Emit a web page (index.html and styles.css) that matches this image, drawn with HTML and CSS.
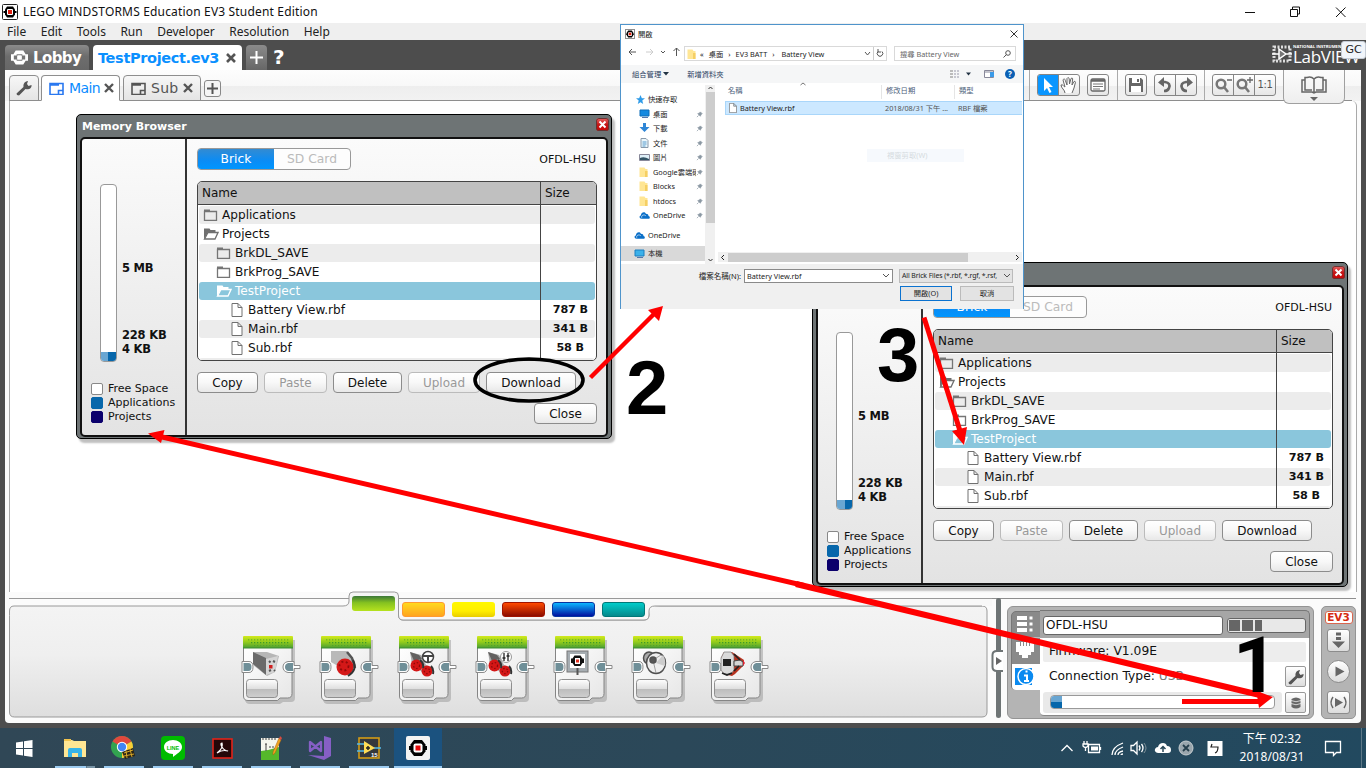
FILE: index.html
```html
<!DOCTYPE html>
<html lang="zh-Hant">
<head>
<meta charset="utf-8">
<title>LEGO MINDSTORMS Education EV3 Student Edition</title>
<link rel="stylesheet" href="styles.css">
</head>
<body>
<svg class="defs" width="0" height="0">
  <defs>
    <linearGradient id="gGreen" x1="0" y1="0" x2="0" y2="1"><stop offset="0" stop-color="#d3ea1c"/><stop offset=".5" stop-color="#93cc1b"/><stop offset="1" stop-color="#4a9e35"/></linearGradient>
    <linearGradient id="gBody" x1="0" y1="0" x2="1" y2="1"><stop offset="0" stop-color="#fff"/><stop offset="1" stop-color="#e6e6e6"/></linearGradient>
    <linearGradient id="gBtn" x1="0" y1="0" x2="0" y2="1"><stop offset="0" stop-color="#fff"/><stop offset=".5" stop-color="#e0e0e0"/><stop offset=".52" stop-color="#bcbcbc"/><stop offset="1" stop-color="#cfcfcf"/></linearGradient>
    <linearGradient id="gPal" x1="0" y1="0" x2="0" y2="1"><stop offset="0" stop-color="#f5f5f5"/><stop offset=".5" stop-color="#efefef"/><stop offset="1" stop-color="#dedede"/></linearGradient>
    <pattern id="dots" width="3" height="3" patternUnits="userSpaceOnUse"><rect x="1" y="1" width="1.300" height="1.300" fill="#3d9a2a"/></pattern>
    <symbol id="folder" viewBox="0 0 15 12"><path d="M1.500 2.500h12v9h-12z" fill="none" stroke="#757575" stroke-width="1.300"/><path d="M1 0.500h6v2H1z" fill="#757575"/></symbol>
    <symbol id="folder-open" viewBox="0 0 16 12"><path d="M1 11V.5h5.500l1 1.500h5v2.500H5z" fill="currentColor"/><path d="M1.500 11L5 4.500h10L12 11z" fill="var(--fill,#fff)" stroke="currentColor" stroke-width="1.300"/></symbol>
    <symbol id="doc" viewBox="0 0 11 14"><path d="M.5.5h6l4 4v9H.5zM6.500.5v4h4" fill="#fff" stroke="#707070"/></symbol>
    <symbol id="pin" viewBox="0 0 8 8"><path d="M1 7l2-2M2 3l3 3 .5-1.500L7 3 5 1 3.500 2.500z" stroke="#8b98a3" fill="#8b98a3" stroke-width=".8"/></symbol>
    <symbol id="yfolder" viewBox="0 0 9 10"><path d="M.5.5h5l1 1.500h2v8h-8z" fill="#ffe694"/><path d="M6 4h2.500v6H6z" fill="#f5cf64"/></symbol>
    <symbol id="cloud" viewBox="0 0 12 8"><path d="M3 8C0 8 0 5 2 4.500 2.500 1 6 0 7.500 2.500c2 0 3 1 2.800 2.500C12.500 5.500 12 8 10.500 8z" fill="#0a6fc8"/><path d="M3 7C2 4 6 3 7.500 5" stroke="#fff" fill="none" stroke-width=".7"/></symbol>
    <symbol id="wrench" viewBox="0 0 18 18"><path d="M2 16l-.5-1.500L8.500 8C8 5 9.500 2.500 13 2l-1 3 1.500 2 3-1C17 9.500 13.500 11 10.500 10L4 16.500z" fill="#555"/></symbol>
    <symbol id="ev3" viewBox="0 0 16 16"><rect x=".5" y=".5" width="15" height="15" rx="1" fill="#fff" stroke="#222"/><path d="M5 2.500h6l2 3v5l-2 3H5l-2-3v-5z" fill="#000"/><path d="M1.500 7h2v2h-2zM12.500 7h2v2h-2z" fill="#000"/><rect x="5" y="5" width="6" height="6" rx="1" fill="#fff"/><rect x="6" y="6" width="4" height="4" fill="#e02010"/></symbol>
    <symbol id="block" viewBox="0 0 64 70">
      <path d="M5 5h49v58q0 4-4 4H42l-3 2H9q-5 0-5-5z" fill="#8d8d8d" opacity=".45"/>
      <path d="M2.500 12v49q0 4.500 4.500 4.500h29.500l2.500-2.500h7.500q4.500 0 4.500-4.500V12z" fill="url(#gBody)" stroke="#858585"/>
      <path d="M2 13V2q0-1 1-1h48q1 0 1 1v11z" fill="url(#gGreen)"/><path d="M2 13h50" stroke="#3c8c30" stroke-width="1"/>
      <path d="M6 4.500h42v6H12z" fill="url(#dots)"/>
      <rect x="5.500" y="44.500" width="31" height="18" rx="3" fill="url(#gBtn)" stroke="#8f8f8f"/>
      <path d="M1 26.500h7q4 0 4 5.500t-4 5.500H1z" fill="#fff" stroke="#8a8a8a"/><path d="M2.500 28h5q3 0 3 4t-3 4h-5z" fill="#6f8f98"/>
      <path d="M53 26.500h-6q-5 1-5 5.500t5 5.500h6v-4h6v-3h-6z" fill="#fff" stroke="#8a8a8a"/><path d="M52 28h-5q-3 1-3 4t3 4h5z" fill="#6f8f98"/>
    </symbol>
    <symbol id="motors" viewBox="0 0 26 26"><path d="M1 1l11 3 5 10 7 4-2 6-9-3-10-8z" fill="#a8a8a8"/><path d="M1 1l9 3 3 4-8 2z" fill="#62605f"/><circle cx="7.500" cy="14.500" r="6" fill="#d41616"/><circle cx="18" cy="20" r="5.500" fill="#d41616"/><circle cx="7.500" cy="14.500" r="3" fill="none" stroke="#8c0909" stroke-dasharray="1.500 2" stroke-width="1.200"/><circle cx="18" cy="20" r="2.700" fill="none" stroke="#8c0909" stroke-dasharray="1.500 2" stroke-width="1.200"/><path d="M11 9q4 3 3 8M22 15q3 3 2 8" stroke="#333" stroke-width="2" fill="none"/></symbol>
  </defs>
</svg>

<header class="titlebar">
  <svg width="16" height="16"><use href="#ev3"/></svg>
  <span class="wtitle">LEGO MINDSTORMS Education EV3 Student Edition</span>
  <svg class="winctl" width="110" height="20"><path d="M5 10.500h10M50.500 7.500h7v7h-7zM52.500 7v-2h7v7h-2M96 5.500l9.500 9.500M105.500 5.500L96 15" fill="none" stroke="#111"/></svg>
</header>
<nav class="menubar"><span>File</span><span>Edit</span><span>Tools</span><span>Run</span><span>Developer</span><span>Resolution</span><span>Help</span></nav>

<main class="app">
  <div class="projtabs">
    <div class="ptab lobby"><svg width="17" height="17" viewBox="0 0 18 18"><path d="M5 1.500h8l2.500 4H18v7h-2.500l-2.500 4H5l-2.500-4H0v-7h2.500z" fill="#fff"/><path d="M6 5.500h6v1.500h3v4h-3v1.500H6V11H3V7h3z" fill="#777"/><rect x="6.500" y="6.500" width="5" height="5" rx="1" fill="#fff"/></svg>Lobby</div>
    <div class="ptab project">TestProject.ev3<svg width="10" height="10"><path d="M1 1l8 8M9 1L1 9" stroke="#555" stroke-width="2.600"/></svg></div>
    <div class="ptab plus"><svg width="13" height="13"><path d="M6.500 0v13M0 6.500h13" stroke="#fff" stroke-width="2"/></svg></div>
    <b class="q">?</b>
    <div class="labview"><svg width="20" height="18" viewBox="0 0 20 18"><rect x="2" y="2" width="16" height="14" fill="none" stroke="#ddd" stroke-width="3" stroke-dasharray="2 1.500"/><path d="M7 4l7 5-7 5zM0 9h7M14 9h6" stroke="#fff" fill="#777" stroke-width="1.500"/></svg><div><small>NATIONAL INSTRUMENTS</small><span>LabVIEW</span></div></div>
    <div class="gc">GC</div>
  </div>

  <div class="panel">
    <div class="toolrow">
      <div class="stab tool"><svg width="18" height="18"><use href="#wrench"/></svg></div>
      <div class="stab active"><svg width="15" height="13"><path d="M1 1.500h13v11H1zM9.500 12V8.500H14M1 3h9" fill="none" stroke="#2a78f0" stroke-width="1.600"/></svg><span>Main</span><svg class="x" width="10" height="10"><path d="M1 1l8 8M9 1L1 9" stroke="#555" stroke-width="2.400"/></svg></div>
      <div class="stab sub"><svg width="15" height="13"><path d="M1 1.500h13v11H1zM9.500 12V8.500H14M1 3h9" fill="none" stroke="#555" stroke-width="1.600"/></svg><span>Sub</span><svg class="x" width="10" height="10"><path d="M1 1l8 8M9 1L1 9" stroke="#555" stroke-width="2.400"/></svg></div>
      <div class="addtab"><svg width="11" height="11"><path d="M5.500 0v11M0 5.500h11" stroke="#555" stroke-width="2"/></svg></div>
      <div class="tools">
        <div class="tg g1">
          <div class="bg"><i class="on"><svg width="20" height="21"><path d="M6 3v13l3-3 2.500 5 2-1-2.500-5h4z" fill="#fff"/></svg></i><i><svg width="20" height="21"><path d="M6 18c0-3-4-5-4-8 2-1 3 2 4 2L4 5c1-2 2-1 2.500 1L8 10V3.500c1-1.500 2-1 2.200.5l.3 5L12 3.500c1.500-1 2 0 1.500 1.500L13 10l2-3.500c1.500-.5 1.500.5 1.300 1.500L15 13l-2 5" fill="#fff" stroke="#666"/></svg></i></div>
          <div class="bg"><i><svg width="20" height="21"><rect x="3" y="4" width="14" height="12" rx="1.500" fill="#fff" stroke="#666" stroke-width="1.300"/><path d="M3 5.500h14" stroke="#666" stroke-width="2.500"/><path d="M5 9h10M5 11.500h10M5 14h7" stroke="#777"/></svg></i></div>
        </div>
        <div class="tg g2">
          <div class="bg"><i><svg width="20" height="21"><path d="M3 3h12l2 2v12H3z" fill="#666"/><path d="M6 3h8v5H6zM5 11h10v6H5z" fill="#fff"/><path d="M11 4h2v3h-2z" fill="#666"/></svg></i></div>
          <div class="bg"><i><svg width="20" height="21"><path d="M7 7h3q6 1 4 6-1 3-5 3" fill="none" stroke="#666" stroke-width="2.600"/><path d="M3 7.500L9 2v10z" fill="#666"/></svg></i><i><svg width="20" height="21"><path d="M13 7h-3q-6 1-4 6 1 3 5 3" fill="none" stroke="#666" stroke-width="2.600"/><path d="M17 7.500L11 2v10z" fill="#666"/></svg></i></div>
        </div>
        <div class="tg g3">
          <div class="bg"><i><svg width="20" height="21"><circle cx="8" cy="9" r="4.300" fill="none" stroke="#777" stroke-width="2.500"/><path d="M11 12l4 5" stroke="#777" stroke-width="2.500"/><path d="M14 5h5" stroke="#666" stroke-width="1.300"/></svg></i><i><svg width="20" height="21"><circle cx="8" cy="9" r="4.300" fill="none" stroke="#777" stroke-width="2.500"/><path d="M11 12l4 5" stroke="#777" stroke-width="2.500"/><path d="M13 5h6M16 2v6" stroke="#666" stroke-width="1.300"/></svg></i><i class="one">1:1</i></div>
        </div>
      </div>
      <div class="book"><svg width="26" height="26" viewBox="0 0 26 26"><path d="M13 3Q10 0 6 1.500H4V4H1v12h10l2 1 2-1h10V4h-3V1.500h-2Q16 0 13 3v13M4 4v10h7M22 4v10h-7" fill="none" stroke="#666" stroke-width="1.500"/><path d="M9 21h8l-4 4z" fill="#666"/></svg></div>
    </div>
    <div class="canvas"></div>

    <div class="bottom">
      <section class="palette">
        <svg class="palbg" width="987" height="131"><path d="M4.500 23.500V120q0 5 5 5H977q5 0 5-5V19q0-5-5-5H650q-6 0-6 5v4q0 5-5 5H398q-4.500 0-4.500-5V4q0-4-4-4H348q-4 0-4 4v5q0 5-6 5H9q-4.500 0-4.500 5z" fill="url(#gPal)" stroke="#999"/><path d="M393.500 6.500H987V14H655Q645 14 644 23q0 5-5 5H398q-4.500 0-4.500-5z" fill="#f8f8f8"/><path d="M393.500 6.500H987M4 6.500H344M393.500 6v17q0 5 4.500 5h241q5 0 5-5v-4q0-5 6-5h327" fill="none" stroke="#999"/></svg>
        <div class="swatches"><i class="s1"></i><i class="s2"></i><i class="s3"></i><i class="s4"></i><i class="s5"></i><i class="s6"></i></div>
        <div class="blocks">
          <svg width="64" height="70"><use href="#block"/><g transform="translate(12 16)"><path d="M0 1h14l12 4-4 16-8 4L0 14z" fill="#b6b6b6"/><path d="M0 1l13 6v17L0 13z" fill="#6a6a6a"/><path d="M13 8l12-3-3 16-9 3z" fill="#d5d5d5"/><path d="M16 10l1.500 1.500M20 10l2 1M16 20l2-1M21 19l1 1" stroke="#555" stroke-width="2"/><rect x="16" y="14" width="3.500" height="3.500" fill="#cf2020"/></g></svg>
          <svg width="64" height="70"><use href="#block"/><g transform="translate(12 16)"><path d="M0 0h16l6 10-10 8L0 11z" fill="#b9b9b9"/><path d="M16 1l5 6 3 10" stroke="#555" stroke-width="2.500" fill="none"/><circle cx="14" cy="16" r="8.500" fill="#d41818"/><circle cx="13" cy="15" r="4.500" fill="none" stroke="#930a0a" stroke-width="1.800" stroke-dasharray="2 2.500"/><path d="M22 9q5 10-5 16" fill="none" stroke="#333" stroke-width="2"/></g></svg>
          <svg width="64" height="70"><use href="#block"/><use href="#motors" x="12" y="16" width="26" height="26"/><circle cx="31" cy="22" r="5.500" fill="#fff" stroke="#444" stroke-width="1.500"/><path d="M26 21h10M31 22v5" stroke="#444" stroke-width="2"/></svg>
          <svg width="64" height="70"><use href="#block"/><use href="#motors" x="12" y="16" width="26" height="26"/><circle cx="31" cy="22" r="5.500" fill="#fff" stroke="#999"/><path d="M29 18v8M33 18v8M27.500 23h3M31.500 21h3" stroke="#222" stroke-width="1.300"/></svg>
          <svg width="64" height="70"><use href="#block"/><rect x="14" y="16" width="21" height="21" fill="#a6adb2" stroke="#777"/><rect x="17" y="19" width="15" height="14" fill="#fff"/><path d="M21.500 20.500h6l2 3h1.500v4.500h-1.500l-2 3h-6l-2-3H18v-4.500h1.500z" fill="#111"/><path d="M22 23h5v6h-5z" fill="#fff"/><path d="M23 24.500h3v3h-3z" fill="#e53020"/><path d="M24.500 33v7" stroke="#555" stroke-width="2"/></svg>
          <svg width="64" height="70"><use href="#block"/><g stroke="#505050" stroke-width="1.500"><ellipse cx="18" cy="23" rx="5.500" ry="6" fill="#aaa"/><ellipse cx="25" cy="28" rx="9.500" ry="10.500" fill="#eee"/><path d="M25 28l7-8q3 5 2 11z" fill="#ccc" stroke="none"/><path d="M22 25l8-5M22 25l3 13" stroke-width=".5"/><circle cx="22" cy="25" r="3" fill="#555"/></g></svg>
          <svg width="64" height="70"><use href="#block"/><path d="M12 23l3-6h8l12 8-1 6-8 8-3 2-8-2-3-5z" fill="#b83320"/><path d="M12 23l3-6h7l3 4v14l-3 4h-7l-3-4z" fill="#dadada" stroke="#777" stroke-width=".7"/><path d="M14 24h8v7h-8z" fill="#222"/><path d="M25 26l6-1 3 2v4h-9z" fill="#d5d5d5" stroke="#444"/><path d="M13 38l5 2 5-2M25 19l6 6M25 36l5-5" stroke="#222" stroke-width="1.700" fill="none"/><path d="M34 25l2 3-2 3z" fill="#e02030"/></svg>
        </div>
      </section>
      <div class="splitter"><svg width="12" height="22"><path d="M12 1H6Q1.500 1 1.500 5v12q0 4 4.500 4h6" fill="#fff" stroke="#6e7475" stroke-width="2"/><path d="M5 7l6 4-6 4z" fill="#666"/></svg></div>
      <section class="brick">
        <div class="side">
          <svg width="28" height="26"><g fill="#fff"><path d="M5 4h10v4H5zM5 10h10v4H5zM5 16h10v4H5zM17.500 4.500h3v3h-3zM17.500 10.500h3v3h-3zM17.500 16.500h3v3h-3z" /></g></svg>
          <svg width="28" height="26"><path d="M4 4h18v10h-3v3h-3v3h-6v-3H7v-3H4z" fill="#fff"/><path d="M8.500 4v4M11.500 4v4M14.500 4v4M17.500 4v4" stroke="#8a8a8a"/></svg>
          <div class="info"><svg width="27" height="26"><path d="M3 4h17v17H3z" fill="#0a8af0"/><circle cx="14" cy="12.500" r="8" fill="#0a8af0" stroke="#fff" stroke-width="1.500"/><path d="M12 11.500h3v5M12 17h5M13.500 7.500h2" stroke="#fff" stroke-width="2" fill="none"/></svg></div>
        </div>
        <div class="bmain">
          <div class="bhead"><div class="bname">OFDL-HSU</div><div class="batt"><i></i><i></i><i></i></div></div>
          <div class="bbody">
            <div class="fw">Firmware: V1.09E</div>
            <div class="ct"><span>Connection Type: <em>USB</em></span><div class="sb"><svg width="18" height="18"><use href="#wrench"/></svg></div></div>
            <div class="mem"><div class="track"><div class="bar"><i></i></div></div><div class="sb"><svg width="12" height="14"><path d="M1.500 3q4.500-3 9 0v8q-4.500 3-9 0z" fill="#666"/><path d="M1 4.500q5 2.500 10 0M1 7.500q5 2.500 10 0" stroke="#eee" stroke-width=".8" fill="none"/></svg></div></div>
          </div>
        </div>
      </section>
      <section class="runcol">
        <div class="ev3logo">EV3</div>
        <div class="rb r1"><svg width="21" height="21"><path d="M8 2.500h5v3H8zM8 7h5v3H8zM4 11.500h13L10.500 18z" fill="#666"/></svg></div>
        <div class="rb round"><svg width="21" height="21"><path d="M7.500 5.500l9 5-9 5z" fill="#666"/></svg></div>
        <div class="rb r3"><svg width="21" height="21"><path d="M7 6l8 4.500L7 15z" fill="#666"/><path d="M5 5q-4 5.500 0 11M16 5q4 5.500 0 11" fill="none" stroke="#666" stroke-width="1.500"/></svg></div>
      </section>
    </div>
  </div>
</main>

<footer class="taskbar">
  <div class="apps">
    <div class="ti start"><svg width="17" height="17"><path d="M0 2.500l7-1v6.500H0zM8 1.300L16.500 0v8H8zM0 9h7v6.500l-7-1zM8 9h8.500v8L8 15.700z" fill="#fff"/></svg></div>
    <div class="ti run two"><svg width="22" height="20"><path d="M0 2h8l2 1h12v16H0z" fill="#ffe693"/><path d="M0 1h7v2H0z" fill="#f2c34c"/><path d="M4 19v-7q0-2 2-2h10q2 0 2 2v7h-4v-4H8v4z" fill="#37b4e8"/></svg></div>
    <div class="ti run"><svg width="26" height="24"><circle cx="11" cy="11" r="11" fill="#32a350"/><path d="M11 11L1.500 5.500A11 11 0 0 1 20.500 5.500z" fill="#e1483d"/><path d="M11 11l9.500-5.500A11 11 0 0 1 11 22z" fill="#fbcd36"/><circle cx="11" cy="11" r="5.200" fill="#fff"/><circle cx="11" cy="11" r="4.200" fill="#4285f4"/><path d="M11 16l11-4 2 8-10 3z" fill="#2a2416"/><path d="M13 17l9-3M13 20l10-2M15 15l1 7M19 13l2 8" stroke="#d8a827"/></svg></div>
    <div class="ti run"><svg width="24" height="24"><rect width="24" height="24" rx="4" fill="#0b0"/><path d="M12 4c5 0 9 3 9 7 0 5-6 7-9 10v-3c-5 0-9-3-9-7s4-7 9-7z" fill="#fff"/><text x="12" y="13.500" font-family="Liberation Sans, sans-serif" font-size="5.500" font-weight="bold" fill="#0b0" text-anchor="middle">LINE</text></svg></div>
    <div class="ti run"><svg width="21" height="21"><rect x="1" y="1" width="19" height="19" fill="#250708" stroke="#e2231a" stroke-width="1.600"/><path d="M5 15c4-3 6-7 5-10-3 0 1 8 6 8-3-1-8 0-11 2" fill="none" stroke="#fff" stroke-width="1.200"/></svg></div>
    <div class="ti run"><svg width="24" height="25"><path d="M2 2h18v22H2z" fill="#f4f6ee"/><path d="M2 15q9-1 18-4v13H2z" fill="#55b82b"/><path d="M4 2v2M7 2v2M10 2v2M13 2v2M16 2v2M7 8v7M6 8h2M10 11h2M13 11h2" stroke="#444" fill="none"/><path d="M20 2l2 2-6 13-2 2v-3z" fill="#f0a51f" stroke="#a55d10" stroke-width=".5"/><path d="M21 0l2 2-1 2-2-1z" fill="#d94b40"/></svg></div>
    <div class="ti run"><svg width="26" height="26"><path d="M17 1l7 2v18l-7 4L1 20l16 1z" fill="#865fc5"/><path d="M3 7v9l11-9v9z" fill="none" stroke="#865fc5" stroke-width="2.300" stroke-linejoin="round"/></svg></div>
    <div class="ti run"><svg width="24" height="23"><rect x="2" y="1" width="20" height="20" fill="#35383c" stroke="#d39b16" stroke-width="1.600"/><path d="M0 7h7M0 14h7M17 11h7" stroke="#55bae8" stroke-width="1.500"/><path d="M7 4l11 7L7 17z" fill="#ffdc55"/><path d="M9 11h4M11 9v4" stroke="#222" stroke-width="1.500"/><text x="14" y="20" font-family="Liberation Sans, sans-serif" font-size="6" font-weight="bold" fill="#fff">15</text></svg></div>
    <div class="ti run cur"><svg width="24" height="24"><rect width="24" height="24" rx="2" fill="#f3f3f3"/><path d="M8 4h8l3.500 4.500v7L16 20H8l-3.500-4.500v-7z" fill="#000"/><path d="M3 10h4v4H3zM17 10h4v4h-4z" fill="#000"/><rect x="7.500" y="7.500" width="9" height="9" rx="2" fill="#fff"/><rect x="9.500" y="9.500" width="5" height="5" fill="#e60c0c"/></svg></div>
  </div>
  <svg class="tray" width="170" height="24"><g fill="none" stroke="#fff" stroke-width="1.300"><path d="M1.500 15l5.500-5.500L12.500 15"/><path d="M28.500 8.500h11v8h-11z"/><path d="M40.500 11v3M24 5v3M27 5v3M23 8h5v2q-2.500 3-5 0zM25.500 12v3"/><path d="M52 19q0-8 11-12M55 19q0-5 8-8M58 19q0-3 5-4M61 19q0-1 2-1"/><path d="M71 9.500h2.500L77 6v12l-3.500-3.500H71z"/><path d="M79 9.500q2 2.500 0 5M81.500 8q3 4 0 8" /></g><path d="M31 10.500h7v4h-7z" fill="#fff"/><path d="M84 7q4 5 0 10" stroke="#7f919a" fill="none"/><path d="M98 17q-4-1-3-4 1-2 3-2 1-4 5-4 3 0 4 3 4 0 4 4 0 3-3 3z" fill="#fff"/><path d="M103 16v-5M100.500 13l2.500-2.500 2.500 2.500" stroke="#2a4858" stroke-width="1.500" fill="none"/><circle cx="126" cy="12" r="7" fill="#9aa6ad" stroke="#c8ced1"/><path d="M123 9l6 6M129 9l-6 6" stroke="#263f4c" stroke-width="1.800"/><rect x="147.500" y="5" width="15" height="15" fill="#fff"/><path d="M152 8l-1 3h7q0 5-3 6" stroke="#222" fill="none" stroke-width="1.200"/></svg>
  <div class="clock"><div>下午 02:32</div><div>2018/08/31</div></div>
  <svg class="note" width="18" height="18"><path d="M1.500 2.500h15v11h-4l-3 3v-3h-8z" fill="none" stroke="#fff" stroke-width="1.300"/></svg>
  <i class="peek"></i>
</footer>

<section class="mem-win first">
  <div class="mt"><b>Memory Browser</b><span class="close"><svg width="13" height="13"><path d="M3.500 3.500l6 6M9.500 3.500l-6 6" stroke="#fff" stroke-width="2"/></svg></span></div>
  <div class="mb">
    <div class="ml">
      <div class="gauge"><div class="tube"><i></i></div><div class="gl"><b class="l1">5 MB</b><b class="l2">228 KB</b><b>4 KB</b></div></div>
      <ul><li><i></i>Free Space</li><li><i class="ap"></i>Applications</li><li><i class="pr"></i>Projects</li></ul>
    </div>
    <div class="mr">
      <div class="mtop"><div class="seg"><span class="on">Brick</span><span>SD Card</span></div><span class="dev">OFDL-HSU</span></div>
      <div class="tbl">
        <div class="th"><span>Name</span><span>Size</span></div>
        <div class="tr d0"><span><svg><use href="#folder"/></svg>Applications</span><b></b></div>
        <div class="tr d0"><span><svg class="op"><use href="#folder-open"/></svg>Projects</span><b></b></div>
        <div class="tr d1"><span><svg><use href="#folder"/></svg>BrkDL_SAVE</span><b></b></div>
        <div class="tr d1"><span><svg><use href="#folder"/></svg>BrkProg_SAVE</span><b></b></div>
        <div class="tr d1 sel"><span><svg class="op"><use href="#folder-open"/></svg>TestProject</span><b></b></div>
        <div class="tr d2"><span><svg><use href="#doc"/></svg>Battery View.rbf</span><b>787 B</b></div>
        <div class="tr d2"><span><svg><use href="#doc"/></svg>Main.rbf</span><b>341 B</b></div>
        <div class="tr d2"><span><svg><use href="#doc"/></svg>Sub.rbf</span><b class="sm">58 B</b></div>
        <div class="tr last"><span></span><b></b></div>
      </div>
      <div class="btns"><button class="w61">Copy</button><button class="w63 off">Paste</button><button class="w69">Delete</button><button class="w72 off">Upload</button><button class="w90">Download</button></div>
      <div class="btns end"><button class="w63">Close</button></div>
    </div>
  </div>
</section>

<section class="mem-win second">
  <div class="mt"><b></b><span class="close"><svg width="13" height="13"><path d="M3.500 3.500l6 6M9.500 3.500l-6 6" stroke="#fff" stroke-width="2"/></svg></span></div>
  <div class="mb">
    <div class="ml">
      <div class="gauge"><div class="tube"><i></i></div><div class="gl"><b class="l1">5 MB</b><b class="l2">228 KB</b><b>4 KB</b></div></div>
      <ul><li><i></i>Free Space</li><li><i class="ap"></i>Applications</li><li><i class="pr"></i>Projects</li></ul>
    </div>
    <div class="mr">
      <div class="mtop"><div class="seg"><span class="on">Brick</span><span>SD Card</span></div><span class="dev">OFDL-HSU</span></div>
      <div class="tbl">
        <div class="th"><span>Name</span><span>Size</span></div>
        <div class="tr d0"><span><svg><use href="#folder"/></svg>Applications</span><b></b></div>
        <div class="tr d0"><span><svg class="op"><use href="#folder-open"/></svg>Projects</span><b></b></div>
        <div class="tr d1"><span><svg><use href="#folder"/></svg>BrkDL_SAVE</span><b></b></div>
        <div class="tr d1"><span><svg><use href="#folder"/></svg>BrkProg_SAVE</span><b></b></div>
        <div class="tr d1 sel"><span><svg class="op"><use href="#folder-open"/></svg>TestProject</span><b></b></div>
        <div class="tr d2"><span><svg><use href="#doc"/></svg>Battery View.rbf</span><b>787 B</b></div>
        <div class="tr d2"><span><svg><use href="#doc"/></svg>Main.rbf</span><b>341 B</b></div>
        <div class="tr d2"><span><svg><use href="#doc"/></svg>Sub.rbf</span><b class="sm">58 B</b></div>
        <div class="tr last"><span></span><b></b></div>
      </div>
      <div class="btns"><button class="w61">Copy</button><button class="w63 off">Paste</button><button class="w69">Delete</button><button class="w72 off">Upload</button><button class="w90">Download</button></div>
      <div class="btns end"><button class="w63">Close</button></div>
    </div>
  </div>
</section>

<section class="open-win">
  <div class="ot"><svg width="10" height="10"><use href="#ev3"/></svg><span>開啟</span><svg class="ox" width="8" height="8"><path d="M.5.5l7 7M7.500.5l-7 7" stroke="#333"/></svg></div>
  <div class="onav">
    <svg width="55" height="12"><g fill="none" stroke="#555"><path d="M0 6h7M3 3L0 6l3 3"/><path d="M17 6h7M21 3l3 3-3 3" stroke="#ccc"/><path d="M32 5l2 2 2-2M47.500 10V2M44.500 5l3-3 3 3"/></g></svg>
    <div class="addr"><svg width="9" height="10"><use href="#yfolder"/></svg><span class="a1">«</span><span class="a2">桌面</span><span class="a3">›</span><span class="a4">EV3 BATT</span><span class="a3">›</span><span class="a5">Battery View</span><svg class="ad" width="24" height="13"><path d="M3 5l2.500 3L8 5" fill="none" stroke="#555"/><path d="M11.500 0v13" stroke="#ccc"/><path d="M16 4.500a2.800 2.800 0 1 0 4 0M16 2v3h3" fill="none" stroke="#555"/></svg></div>
    <div class="search"><span>搜尋 Battery View</span><svg width="8" height="8"><circle cx="5" cy="3" r="2.300" fill="none" stroke="#555"/><path d="M3.500 4.500L.5 7.500" stroke="#555"/></svg></div>
  </div>
  <div class="ocmd"><span>組合管理</span><svg class="c1" width="6" height="4"><path d="M0 0h6L3 3.500z" fill="#234"/></svg><span>新增資料夾</span><svg class="c2" width="66" height="12"><path d="M1 2h3v2H1zM1 5h3v2H1zM1 8h3v2H1z" fill="#bbb"/><path d="M5 3h2M8 3h2M5 6h2M8 6h2M5 9h2M8 9h2" stroke="#99a"/><path d="M17 4.500h5l-2.500 3z" fill="#234"/><path d="M35.500 2.500h9v7h-9zM35 4h10" fill="#fff" stroke="#889"/><path d="M41 4h4v5h-4z" fill="#3b9ae8"/><circle cx="61" cy="6" r="5" fill="#0a5fb4"/><text x="61" y="9" fill="#fff" font-size="8" font-weight="bold" font-family="Noto Sans, sans-serif" text-anchor="middle">?</text></svg></div>
  <div class="omid">
    <div class="tree">
      <div class="q0"><svg width="9" height="9" viewBox="0 0 10 10"><path d="M5 0l1.500 3.500H10L7 6l1 4-3-2-3 2 1-4-3-2.500h3.500z" fill="#2f9be8"/></svg>快速存取</div>
      <div class="q1"><svg width="11" height="9"><path d="M1 1h9v6H1z" fill="#1489e0" stroke="#0c6cb8"/><path d="M3 8.500h6" stroke="#57a"/></svg>桌面<svg class="pin"><use href="#pin"/></svg></div>
      <div class="q1"><svg width="11" height="10"><path d="M4 0h3v4h3.500l-5 5-5-5H4z" fill="#2f86d6"/></svg>下載<svg class="pin"><use href="#pin"/></svg></div>
      <div class="q1"><svg width="11" height="10"><path d="M2 .5h5l2 2v7H2z" fill="#eaf6fb" stroke="#89a"/><path d="M3.500 4h4M3.500 6h4M3.500 8h3" stroke="#59c"/></svg>文件<svg class="pin"><use href="#pin"/></svg></div>
      <div class="q1"><svg width="11" height="9"><path d="M.5 1.500h10v6H.5z" fill="#dff0f8" stroke="#889"/><path d="M1 7V5q4-2 9 1v1z" fill="#356"/></svg>圖片<svg class="pin"><use href="#pin"/></svg></div>
      <div class="q1"><svg width="11" height="10"><use href="#yfolder" width="9" height="10"/></svg><span class="cut">Google雲端硬</span><svg class="pin"><use href="#pin"/></svg></div>
      <div class="q1"><svg width="11" height="10"><use href="#yfolder" width="9" height="10"/></svg>Blocks<svg class="pin"><use href="#pin"/></svg></div>
      <div class="q1"><svg width="11" height="10"><use href="#yfolder" width="9" height="10"/></svg>htdocs<svg class="pin"><use href="#pin"/></svg></div>
      <div class="q1"><svg width="11" height="8"><use href="#cloud"/></svg>OneDrive<svg class="pin"><use href="#pin"/></svg></div>
      <div class="q0 od"><svg width="11" height="8"><use href="#cloud"/></svg>OneDrive</div>
      <div class="q0 pc"><svg width="11" height="9"><path d="M1 1h9v6H1z" fill="#3bb1ea" stroke="#1a7fc0"/><path d="M3 8.500h6" stroke="#57a"/></svg>本機</div>
    </div>
    <div class="vsb"><svg width="9" height="6"><path d="M2.500 4l2-2 2 2" fill="none" stroke="#333"/></svg><i></i><svg width="9" height="7"><path d="M2.500 3l2 2 2-2" fill="none" stroke="#333"/></svg></div>
    <div class="files">
      <svg class="sortc" width="6" height="4"><path d="M.5 3L3 1l2.500 2" fill="none" stroke="#777"/></svg>
      <div class="fh"><span class="c-n">名稱</span><span class="c-d">修改日期</span><span class="c-t">類型</span></div>
      <div class="fr"><span class="c-n"><svg width="8" height="10"><use href="#doc"/></svg>Battery View.rbf</span><span class="c-d">2018/08/31 下午 ...</span><span class="c-t">RBF 檔案</span></div>
      <div class="ghost">視窗剪取(W)</div>
      <div class="hsb"><svg width="10" height="9"><path d="M6 2L3.500 4.500 6 7" fill="none" stroke="#222"/></svg><i></i><svg width="10" height="9"><path d="M4 2l2.500 2.500L4 7" fill="none" stroke="#222"/></svg></div>
    </div>
  </div>
  <div class="ofoot">
    <div class="r"><span class="lb">檔案名稱(N):</span><div class="inp">Battery View.rbf<svg width="8" height="5"><path d="M1 1l3 3 3-3" fill="none" stroke="#555"/></svg></div><div class="cmb"><span>All Brick Files (*.rbf, *.rgf, *.rsf,</span><svg width="8" height="5"><path d="M1 1l3 3 3-3" fill="none" stroke="#555"/></svg></div></div>
    <div class="r r2"><div class="ok">開啟(O)</div><div class="cancel">取消</div></div>
  </div>
</section>

<svg class="marks" width="1366" height="768">
  <g fill="none" stroke="#f00">
    <path d="M160 436.500L804 585.500" stroke-width="5"/><path d="M796 584L1260 695" stroke-width="6"/>
    <path d="M1182 701.500h78" stroke-width="5"/><path d="M590.500 377.500L655 313" stroke-width="4.500"/><path d="M924 317.500L961 434" stroke-width="5"/>
  </g>
  <g fill="#f00"><path d="M148 433.500L164.500 430 161 443zM1273 697l-16-6v4l2 13zM663 306l-4 15-11-11zM964 445l-12-14 15-4z"/></g>
  <ellipse cx="529" cy="380" rx="54" ry="21" fill="none" stroke="#000" stroke-width="3.600"/>
  <g class="num"><text x="626" y="414">2</text><text x="877" y="381">3</text><text class="one-digit" x="1233" y="692">1</text></g>
</svg>
</body>
</html>
```
FILE: styles.css
```css
* { box-sizing: border-box; }
body { margin: 0; width: 1366px; height: 768px; overflow: hidden; position: relative; display: flex; flex-direction: column; font-family: "DejaVu Sans", "Noto Sans CJK TC", sans-serif; font-size: 12px; color: #111; background: #fff; }
svg { display: block; flex: none; }
i { font-style: normal; }
.defs { position: absolute; }

.titlebar { height: 23px; display: flex; align-items: center; padding-left: 2px; flex: none; background: #fff; }
.wtitle { font: 12px/23px "Noto Sans", sans-serif; margin-left: 5px; white-space: nowrap; letter-spacing: .17px; }
.winctl { margin-left: auto; margin-right: 16px; }
.menubar { height: 17px; flex: none; background: #efefef; display: flex; gap: 14.500px; padding-left: 7px; font: 12px/17px "Noto Sans", sans-serif; color: #222; }

.app { height: 688px; flex: none; background: #4d4d4d; padding: 0 5px 5px; display: flex; flex-direction: column; }
.projtabs { height: 30px; display: flex; align-items: flex-end; flex: none; }
.ptab { height: 25px; border-radius: 4px 4px 0 0; display: flex; align-items: center; font-weight: bold; }
.lobby { width: 84px; background: linear-gradient(#8b8b8b, #6d6d6d 45%, #676767); color: #fff; padding-left: 6px; gap: 5px; font-size: 15px; letter-spacing: -.6px; }
.project { width: 149px; margin-left: 4px; padding-left: 5px; gap: 7px; background: #fff; color: #0a90ff; font-size: 14.500px; letter-spacing: -.35px; white-space: nowrap; }
.plus { width: 21px; margin-left: 4px; background: linear-gradient(#8b8b8b, #666); justify-content: center; }
.q { color: #fff; font-size: 20px; line-height: 25px; margin-left: 6px; }
.labview { margin-left: auto; display: flex; gap: 1px; color: #fff; height: 25px; align-items: flex-start; width: 74px; margin-right: 15px; font-family: "Open Sans", sans-serif; }
.labview small { display: block; font-size: 4.200px; line-height: 4px; white-space: nowrap; font-weight: bold; }
.labview span { display: block; font-size: 17px; line-height: 16px; letter-spacing: -.3px; }
.gc { position: absolute; left: 1341px; top: 41px; width: 25px; height: 18px; border-radius: 3px; background: #f1f5fa; border: 1px solid #c5ccd5; font: 11px/16px "DejaVu Sans", sans-serif; text-align: center; color: #222; }

.panel { height: 653px; background: #fbfbfb; border-radius: 0 4px 4px 4px; display: flex; flex-direction: column; }
.toolrow { height: 31px; flex: none; display: flex; align-items: flex-end; padding: 0 16px 0 4px; background: linear-gradient(#fdfdfd, #f8f8f8 50%, #eee 52%, #f2f2f2); position: relative; }
.toolrow::after { content: ""; position: absolute; left: 4px; right: 9px; bottom: 0; height: 1px; background: #8e8e8e; }
.stab { height: 26px; border: 1px solid #8e8e8e; border-radius: 4px 4px 0 0; background: linear-gradient(#f7f7f7, #e4e4e4); display: flex; align-items: center; padding-left: 7px; gap: 5px; width: 78px; margin-right: 3px; font-size: 14px; letter-spacing: -.6px; color: #555; }
.stab.sub { letter-spacing: .3px; }
.stab .x { margin-left: -1px; }
.stab.tool { width: 30px; padding-left: 5px; margin-right: 2px; }
.stab.active { width: 79px; background: #fff; color: #0a8cff; border-bottom-color: #fff; z-index: 1; position: relative; }
.addtab { width: 17px; height: 17px; margin: 0 0 4px 0; border: 1px solid #888; border-radius: 3px; background: #f5f5f5; display: flex; align-items: center; justify-content: center; }
.tools { margin-left: auto; display: flex; height: 31px; }
.tg { display: flex; border-left: 1px solid #aaa; padding: 4px 0 0 7px; gap: 7px; }
.g1 { width: 88px; }
.g2 { width: 87px; }
.g3 { width: 79px; }
.bg { height: 22px; display: flex; border: 1px solid #858585; border-radius: 3px; background: linear-gradient(#fff, #e6e6e6); overflow: hidden; }
.bg i { display: block; }
.bg i + i { border-left: 1px solid #858585; }
.bg .on { background: #0a96ff; }
.one { font: 10px/20px "DejaVu Sans", sans-serif; width: 21px; text-align: center; color: #555; letter-spacing: -.4px; }
.book { width: 62px; height: 34px; margin-bottom: -3px; background: linear-gradient(#fcfcfc, #eee); border: 1px solid #a0a0a0; border-top: 0; border-radius: 0 0 6px 6px; z-index: 2; display: flex; justify-content: center; padding-top: 6px; }
.canvas { height: 491px; flex: none; margin: 0 4px; background: #fff; border: solid #a9a9a9; border-width: 0 1px; border-radius: 0 5px 0 0; }
.bottom { height: 131px; flex: none; display: flex; border-radius: 0 0 4px 4px; position: relative; }
.palette { width: 987px; position: relative; z-index: 1; }
.palbg { position: absolute; left: 0; top: 0; overflow: visible; }
.swatches { position: relative; display: flex; gap: 7px; padding: 10px 0 0 397px; height: 44px; }
.swatches i { width: 43px; height: 15px; border-radius: 3px; flex: none; }
.s1 { margin-left: -50px; margin-top: -6px; background: linear-gradient(#3c7838, #85c220 45%, #b6e21e); }
.s2 { background: linear-gradient(#ffd91e, #ffa51e); border: 1px solid #ff9a30; }
.s3 { background: linear-gradient(#fff800, #ffee00 60%, #e8cc00); }
.s4 { background: linear-gradient(#ff4a00, #8b0c00); border: 1px solid #a01400; }
.s5 { background: linear-gradient(#0cb6ff, #0010a0); border: 1px solid #0634a0; }
.s6 { background: linear-gradient(#00ccca, #058a8c); border: 1px solid #007878; }
.blocks { position: relative; display: flex; gap: 14px; padding-left: 236px; margin-top: -1px; }
.bottom::before { content: ""; position: absolute; left: 987px; right: 5px; top: 6px; height: 1px; background: #8e8e8e; }
.splitter { width: 5px; height: 120px; margin: 6px 0 0 4px; background: #6e7475; border-radius: 3px; display: flex; align-items: center; z-index: 1; }
.splitter svg { margin: 6px 0 0 -5px; }
.brick { width: 307px; height: 113px; margin: 14px 0 0 6px; border: 1px solid #949494; border-radius: 6px; background: #b4b4b4; padding: 3px; display: flex; }
.side { width: 30px; height: 79px; margin-top: 1px; background: #8a8a8a; border: 1px solid #777; border-radius: 5px 0 0 4px; }
.side > svg:first-child { border-bottom: 1px solid #bbb; }
.info { height: 26px; background: #fff; border-radius: 0 0 0 4px; width: 30px; position: relative; }
.bmain { flex: 1; margin-left: -1px; }
.bhead { height: 28px; background: #a6a6a6; border: 1px solid #777; border-left: 0; border-bottom: 0; border-radius: 0 5px 0 0; display: flex; align-items: center; padding: 1px 0 0 3px; gap: 4px; }
.bname { width: 180px; height: 19px; border: 1px solid #666; border-radius: 3px; background: #fff; padding-left: 2px; font-size: 12px; line-height: 17px; }
.batt { width: 79px; height: 15px; border: 1px solid #666; border-radius: 3px; background: #e8e8e8; display: flex; gap: 2px; padding: 1px; }
.batt i { width: 11px; height: 11px; background: #666; }
.batt i:last-child { width: 7px; }
.bbody { height: 78px; background: #fff; border: 1px solid #888; border-top: 0; border-left: 0; border-radius: 0 0 4px 4px; padding: 4px 3px 2px 3px; }
.fw { background: #ededed; border-radius: 2px; height: 20px; line-height: 18px; padding-left: 6px; font-size: 12.300px; }
.ct { display: flex; justify-content: space-between; height: 30px; padding: 4px 0 0 6px; line-height: 21px; font-size: 12.300px; }
.ct em { font-style: normal; color: #777; }
.sb { width: 21px; height: 21px; border: 1px solid #999; border-radius: 2px; background: linear-gradient(#fff, #ddd); display: flex; align-items: center; justify-content: center; }
.mem { display: flex; justify-content: space-between; }
.track { width: 239px; height: 21px; background: #e9e9e9; border-radius: 3px; padding: 3px 7px; }
.bar { height: 14px; border: 1px solid #999; border-radius: 4px; background: #fff; overflow: hidden; }
.bar i { display: block; width: 11px; height: 12px; background: linear-gradient(#69a6d2 50%, #0767ab 50%); }
.runcol { width: 35px; height: 113px; margin: 14px 0 0 7px; background: #b4b4b4; border: 1px solid #949494; border-radius: 5px; display: flex; flex-direction: column; align-items: center; padding-top: 4px; }
.ev3logo { width: 28px; height: 13px; border-radius: 3px; background: #fff; border: 1px solid #d9664f; color: #d52a10; font: bold 10.500px/11px "DejaVu Sans", sans-serif; text-align: center; }
.rb { width: 23px; height: 23px; border: 1px solid #8c8c8c; border-radius: 3px; background: linear-gradient(#fff, #dcdcdc); }
.r1 { margin-top: 5px; }
.round { border-radius: 50%; margin: 8px 0; }

.taskbar { height: 40px; flex: none; background: linear-gradient(90deg, #304756, #2b4859 50%, #22495f); display: flex; color: #fff; position: relative; }
.apps { display: flex; gap: 1px; width: 1060px; }
.ti { width: 48px; height: 40px; display: flex; align-items: center; justify-content: center; position: relative; }
.ti.start { margin-right: 2px; }
.run::after { content: ""; position: absolute; left: 4px; right: 4px; bottom: 0; height: 2px; background: #9ccbf0; }
.two::after { background: linear-gradient(90deg, #9ccbf0 31px, #435d6d 31px, #7894a6 32px); }
.cur { background: #1b527f; }
.cur::after { left: 0; right: 0; }
.tray { margin-top: 8px; }
.clock { width: 84px; text-align: center; font: 12px/18px "Noto Sans", "Noto Sans CJK TC", sans-serif; padding-top: 2px; letter-spacing: .1px; }
.note { margin: 11px 0 0 10px; }
.peek { position: absolute; right: 4px; top: 0; width: 1px; height: 40px; background: #5d7887; }

.mem-win { position: absolute; width: 536px; height: 325px; background: #6e7475; border: 1px solid #000; border-radius: 5px; box-shadow: 3px 4px 2px rgba(0,0,0,.25); padding: 0 3px; }
.first { left: 76px; top: 114px; }
.second { left: 812px; top: 262px; }
.mt { height: 22px; display: flex; justify-content: space-between; align-items: center; color: #fff; padding-left: 2px; font-size: 11px; letter-spacing: -.02px; }
.close { width: 13px; height: 13px; border-radius: 3px; background: linear-gradient(#e66, #c41818 50%, #c00); margin: -4px -1px 0 0; outline: 1px solid #633; outline-offset: -1px; }
.mb { height: 300px; border: 2px solid #111; border-radius: 5px; background: linear-gradient(#fbfbfb, #e3e3e3); display: flex; }
.ml { width: 105px; border-right: 2px solid #333; padding: 45px 0 0 18px; flex: none; }
.gauge { display: flex; height: 179px; }
.tube { width: 17px; height: 178px; border: 1px solid #999; border-radius: 4px; background: #fff; display: flex; align-items: flex-end; overflow: hidden; }
.tube i { width: 100%; height: 9px; background: linear-gradient(90deg, #69a6d2 50%, #0767ab 50%); }
.gl { font-size: 11.500px; line-height: 14px; padding: 77px 0 0 5px; display: flex; flex-direction: column; letter-spacing: -.2px; white-space: nowrap; }
.l2 { margin-top: 53px; }
.ml ul { list-style: none; margin: 19px 0 0 -9px; padding: 0; font-size: 11px; line-height: 14px; white-space: nowrap; }
.ml li { display: flex; gap: 5px; height: 14px; }
.ml li i { width: 12px; height: 12px; border: 1px solid #888; border-radius: 2px; background: #fff; margin-top: 1px; }
.ml li .ap { background: #0767ab; border-color: #0767ab; }
.ml li .pr { background: #0b006c; border-color: #0b006c; }
.mr { width: 419px; padding: 9px 9px 0 10px; }
.mtop { display: flex; justify-content: space-between; align-items: center; height: 22px; }
.seg { display: flex; width: 154px; height: 22px; border: 1px solid #999; border-radius: 4px; overflow: hidden; background: #fdfdfd; font-size: 12.300px; line-height: 20px; text-align: center; color: #bbb; }
.seg span { flex: 1; }
.seg .on { background: linear-gradient(#338bd2, #0a8cf5 60%, #0096ff); color: #fff; }
.dev { font-size: 11px; margin-right: 1px; }
.tbl { width: 400px; height: 180px; margin-top: 11px; border: 1px solid #444; border-radius: 5px; overflow: hidden; background: linear-gradient(90deg, transparent 342px, #444 342px, #444 343px, transparent 343px), #fff; }
.th { height: 23px; background: #c0c0c0; border-bottom: 1px solid #444; display: flex; line-height: 23px; font-size: 12px; margin-bottom: 1px; }
.th span:first-child { width: 343px; border-right: 1px solid #444; padding-left: 4px; }
.th span + span { padding-left: 4px; }
.tr { height: 18px; margin: 0 1px 1px; display: flex; border-radius: 3px; line-height: 18px; font-size: 12.100px; white-space: nowrap; }
.tr:nth-child(even) { background: linear-gradient(90deg, transparent 341px, #444 341px, #444 342px, transparent 342px), #ececec; }
.tr span { width: 342px; display: flex; align-items: center; gap: 4px; }
.tr svg { width: 15px; height: 12px; overflow: hidden; }
.tr .op { color: #707070; width: 16px; margin-right: -1px; }
.tr b { font-size: 11.200px; width: 47px; text-align: right; letter-spacing: -.1px; }
.tr .sm { width: 43px; }
.d0 span { padding-left: 4px; }
.d1 span { padding-left: 17px; }
.d2 span { padding-left: 31px; gap: 4px; }
.d2 svg { width: 14px; height: 14px; }
.tr.sel { background: linear-gradient(90deg, transparent 341px, #444 341px, #444 342px, transparent 342px), #8ac6dc; color: #fff; }
.sel .op { color: #fff; --fill: #8ac6dc; }
.btns { display: flex; gap: 6px; margin-top: 11px; }
.btns.end { justify-content: flex-end; margin-top: 10px; }
button { height: 21px; padding: 0; border: 1px solid #8c8c8c; border-radius: 4px; background: linear-gradient(#fff, #f8f8f8 50%, #e8e8e8); font: 12px/18px "DejaVu Sans", sans-serif; color: #111; flex: none; }
button.off { color: #999; border-color: #bbb; }
.w61 { width: 61px; } .w63 { width: 63px; } .w69 { width: 69px; } .w72 { width: 72px; } .w90 { width: 90px; }

.open-win { position: absolute; left: 620px; top: 24px; width: 404px; height: 285px; background: #fff; border: 1px solid #4f94cb; border-bottom: 0; font: 7.300px/12px "Noto Sans", "Noto Sans CJK TC", sans-serif; color: #222; }
.ot { height: 17px; display: flex; align-items: center; padding-left: 4px; gap: 3px; }
.ox { margin: 0 5px 0 auto; }
.onav { display: flex; height: 23px; padding: 4px 7px 0 8px; align-items: flex-start; }
.addr { width: 203px; height: 15px; border: 1px solid #d9d9d9; display: flex; align-items: center; padding-left: 2px; }
.a1 { margin-left: 4px; } .a2 { margin-left: 5px; } .a3 { margin: 0 5px; } .a5 { margin-left: 2px; }
.ad { margin-left: auto; }
.search { width: 122px; height: 15px; border: 1px solid #d9d9d9; margin-left: 7px; display: flex; align-items: center; justify-content: space-between; padding: 0 4px 0 5px; color: #666; }
.ocmd { height: 18px; background: #f5f6f7; display: flex; align-items: center; padding-left: 11px; color: #1e395b; margin-bottom: 2px; }
.c1 { margin: 0 18px 0 2px; }
.c2 { margin: 0 8px 0 auto; }
.omid { display: flex; height: 179px; }
.tree { width: 84px; padding-top: 7px; }
.tree div { display: flex; align-items: center; height: 14.500px; position: relative; white-space: nowrap; }
.tree .q0 { padding-left: 15px; gap: 3px; }
.tree .q1 { padding-left: 18px; gap: 3px; }
.tree .od { margin-top: 5px; padding-left: 13px; }
.tree .pc { margin-top: 4px; padding-left: 13px; background: #d9d9d9; }
.cut { width: 43px; overflow: hidden; }
.pin { width: 7px; height: 7px; position: absolute; right: 2px; top: 4px; }
.vsb { width: 10px; background: #f0f0f0; display: flex; flex-direction: column; align-items: center; }
.vsb i { width: 9px; height: 131px; background: #cdcdcd; margin: 1px 0 33px; }
.files { width: 308px; padding-left: 4px; position: relative; }
.sortc { position: absolute; left: 85px; top: -3px; }
.fh { display: flex; height: 14px; color: #4c607a; margin-bottom: 2px; }
.fh span { line-height: 10px; }
.c-n { width: 156px; padding-left: 7px; margin-right: 6px; }
.c-d { width: 73px; }
.fh .c-n { border-right: 1px solid #e5e5e5; width: 163px; margin-right: 4px; padding-left: 9px; }
.fh .c-d { border-right: 1px solid #e5e5e5; width: 69px; margin-right: 4px; }
.fr { height: 14px; background: #cce8ff; border: 1px solid #a9d6fa; border-right: 0; margin-left: 6px; display: flex; align-items: center; white-space: nowrap; color: #555; width: 297px; padding-left: 3px; }
.fr .c-n { padding-left: 0; display: flex; gap: 3px; align-items: center; color: #222; width: 153px; margin-right: 3px; }
.ghost { width: 97px; height: 13px; margin: 34px 0 0 148px; background: #f6f9fd; color: #d5dbe0; padding-left: 20px; }
.hsb { display: flex; height: 10px; background: #f0f0f0; margin: 90px 0 0 -1px; align-items: center; width: 304px; }
.hsb i { width: 240px; height: 9px; background: #cdcdcd; margin-right: auto; }
.ofoot { height: 45px; background: #f0f0f0; padding-top: 4px; }
.r { display: flex; align-items: center; height: 15px; }
.lb { width: 123px; text-align: right; padding-right: 3px; white-space: nowrap; font-size: 7.500px; }
.inp { width: 149px; height: 14px; background: #fff; border: 1px solid #8a8a8a; padding: 0 2px; display: flex; justify-content: space-between; align-items: center; }
.cmb { width: 114px; height: 14px; border: 1px solid #bbb; background: #e3e3e3; margin-left: 6px; display: flex; justify-content: space-between; align-items: center; padding: 0 1px 0 2px; white-space: nowrap; font-size: 6.900px; letter-spacing: -.1px; }
.r2 { margin-top: 3px; justify-content: flex-end; padding-right: 9px; gap: 8px; }
.ok { width: 52px; height: 15px; border: 1.500px solid #0a72d0; background: #e3e3e3; text-align: center; }
.cancel { width: 54px; height: 15px; border: 1px solid #bbb; background: #e3e3e3; text-align: center; }

.marks { position: absolute; left: 0; top: 0; pointer-events: none; z-index: 5; }
.num { font: bold 76px "Liberation Sans", sans-serif; }
.one-digit { font-family: Roboto, sans-serif; font-size: 78px; }
```
